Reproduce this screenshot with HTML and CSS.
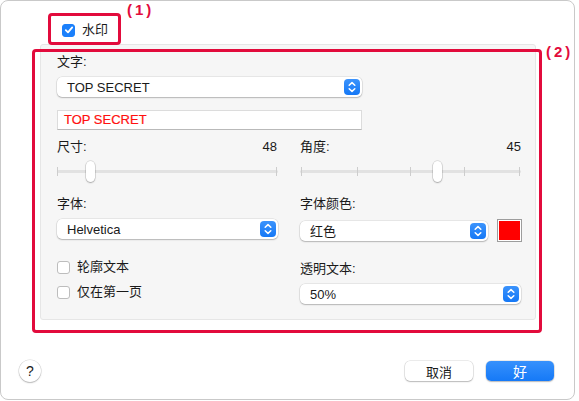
FILE: index.html
```html
<!DOCTYPE html>
<html lang="zh">

<head>
  <meta charset="UTF-8">
  <title>水印</title>
  <link rel="stylesheet" href="styles.css">
</head>

<body>

  <section class="dialog">
    <div class="head">
      <label class="check check-on">
        <span class="box">
          <svg width="10" height="10" viewBox="0 0 10 10"><path d="M1.8 5.2 L4 7.4 L8.2 2.4" fill="none" stroke="#fff" stroke-width="1.8" stroke-linecap="round" stroke-linejoin="round"/></svg>
        </span>
        水印
      </label>
    </div>

    <div class="panel">
      <div class="label">文字:</div>
      <div class="popup wide">
        <span>TOP SECRET</span>
        <span class="stepper">
          <svg width="16" height="16" viewBox="0 0 16 16"><path d="M5.2 6.3 L8 3.6 L10.8 6.3 M5.2 9.7 L8 12.4 L10.8 9.7" fill="none" stroke="#fff" stroke-width="1.5" stroke-linecap="round" stroke-linejoin="round"/></svg>
        </span>
      </div>
      <div class="field">TOP SECRET</div>

      <div class="cols">
        <div class="col">
          <div class="label row"><span>尺寸:</span><span>48</span></div>
          <div class="slider">
            <i class="tick" style="left: 0"></i>
            <i class="tick" style="left: 219px"></i>
            <span class="knob" style="left: 29px"></span>
          </div>
          <div class="label gap">字体:</div>
          <div class="popup">
            <span>Helvetica</span>
            <span class="stepper">
              <svg width="16" height="16" viewBox="0 0 16 16"><path d="M5.2 6.3 L8 3.6 L10.8 6.3 M5.2 9.7 L8 12.4 L10.8 9.7" fill="none" stroke="#fff" stroke-width="1.5" stroke-linecap="round" stroke-linejoin="round"/></svg>
            </span>
          </div>
          <label class="check plain first"><span class="box"></span>轮廓文本</label>
          <label class="check plain second"><span class="box"></span>仅在第一页</label>
        </div>

        <div class="col">
          <div class="label row"><span>角度:</span><span>45</span></div>
          <div class="slider">
            <i class="tick" style="left: 1px"></i>
            <i class="tick" style="left: 57px"></i>
            <i class="tick" style="left: 110px"></i>
            <i class="tick" style="left: 164px"></i>
            <i class="tick" style="left: 219px"></i>
            <span class="knob" style="left: 133px"></span>
          </div>
          <div class="label gap">字体颜色:</div>
          <div class="color-row">
            <div class="popup">
              <span>红色</span>
              <span class="stepper">
                <svg width="16" height="16" viewBox="0 0 16 16"><path d="M5.2 6.3 L8 3.6 L10.8 6.3 M5.2 9.7 L8 12.4 L10.8 9.7" fill="none" stroke="#fff" stroke-width="1.5" stroke-linecap="round" stroke-linejoin="round"/></svg>
              </span>
            </div>
            <div class="swatch"><span></span></div>
          </div>
          <div class="label alpha">透明文本:</div>
          <div class="popup">
            <span>50%</span>
            <span class="stepper">
              <svg width="16" height="16" viewBox="0 0 16 16"><path d="M5.2 6.3 L8 3.6 L10.8 6.3 M5.2 9.7 L8 12.4 L10.8 9.7" fill="none" stroke="#fff" stroke-width="1.5" stroke-linecap="round" stroke-linejoin="round"/></svg>
            </span>
          </div>
        </div>
      </div>
    </div>

    <footer class="foot">
      <button class="help">?</button>
      <div class="actions">
        <button class="btn">取消</button>
        <button class="btn primary">好</button>
      </div>
    </footer>

    <div class="mark mark-1"></div>
    <div class="tag tag-1">(1)</div>
    <div class="mark mark-2"></div>
    <div class="tag tag-2">(2)</div>
  </section>

</body>

</html>
```

FILE: styles.css
```css
* {
  margin: 0;
  padding: 0;
  box-sizing: border-box;
  font-family: "Liberation Sans", "Noto Sans CJK SC", sans-serif;

  --mark-red: #e20b3c;
  --blue: #1b80fb;
  --text: #1a1a1a;
}

body {
  background-color: #fff;
  width: 579px;
  height: 401px;
  overflow: hidden;
}

.dialog {
  position: relative;
  width: 575px;
  height: 400px;
  background-color: #fff;
  border: 1px solid #c9c9c9;
  border-radius: 8px;
  color: var(--text);
  font-size: 13px;
  display: flex;
  flex-direction: column;
}

.head {
  height: 43px;
  padding: 21px 0 0 61px;
}

.check {
  display: flex;
  align-items: center;
  gap: 7px;
  height: 16px;
  line-height: 16px;
}

.check .box {
  width: 13px;
  height: 13px;
  border-radius: 3px;
  background-color: #fff;
  border: 1px solid #bdbdbd;
  display: grid;
  place-content: center;
}

.check-on .box {
  background-color: var(--blue);
  border-color: var(--blue);
}

.panel {
  margin-left: 39px;
  width: 496px;
  height: 276px;
  background-color: #f6f6f6;
  border: 1px solid #e6e6e6;
  border-radius: 3px;
  padding: 9px 0 0 16px;
}

.label {
  height: 16px;
  line-height: 16px;
}

.label.row {
  display: flex;
  justify-content: space-between;
  padding-right: 1px;
}

.popup {
  margin-top: 7px;
  height: 20px;
  width: 221px;
  background-color: #fff;
  border-radius: 5px;
  box-shadow: 0 0 0 0.5px rgba(0, 0, 0, 0.12), 0 1px 1.5px rgba(0, 0, 0, 0.22);
  display: flex;
  align-items: center;
  justify-content: space-between;
  padding: 0 2px 0 10px;
}

.popup.wide {
  width: 305px;
}

.stepper {
  width: 16px;
  height: 16px;
  border-radius: 4px;
  background: linear-gradient(#3b93fc, #1578f6);
  display: grid;
  place-content: center;
}

.field {
  margin-top: 13px;
  width: 305px;
  height: 20px;
  background-color: #fff;
  border: 1px solid #dcdcdc;
  border-bottom-color: #b9b9b9;
  color: #ff1010;
  font-weight: 500;
  -webkit-text-stroke: 0.2px #ff1010;
  line-height: 18px;
  padding-left: 6px;
}

.cols {
  display: grid;
  grid-template-columns: 221px 222px;
  gap: 22px;
  margin-top: 9px;
}

.slider {
  position: relative;
  height: 21px;
  margin-top: 6px;
  width: 221px;
}

.slider::before {
  content: "";
  position: absolute;
  left: 0;
  right: 0;
  top: 9px;
  height: 3px;
  background-color: #e2e2e2;
  border-radius: 2px;
}

.tick {
  position: absolute;
  top: 6px;
  width: 1px;
  height: 9px;
  background-color: #cdcdcd;
}

.knob {
  position: absolute;
  top: 0;
  width: 9px;
  height: 21px;
  border-radius: 5px;
  background-color: #fff;
  box-shadow: 0 0 0 0.5px rgba(0, 0, 0, 0.18), 0 1px 1.5px rgba(0, 0, 0, 0.25);
}

.label.gap {
  margin-top: 14px;
}

.color-row {
  display: flex;
  align-items: center;
  gap: 9px;
}

.color-row .popup {
  width: 188px;
}

.swatch {
  margin-top: 7px;
  width: 25px;
  height: 23px;
  border: 1px solid #9d9d9d;
  padding: 1px;
  background-color: #fff;
}

.swatch span {
  display: block;
  height: 100%;
  background-color: #ff0000;
}

.check.first {
  margin-top: 20px;
}

.check.second {
  margin-top: 9px;
}

.label.alpha {
  margin-top: 19px;
}

.foot {
  display: flex;
  justify-content: space-between;
  align-items: center;
  padding: 0 20px 0 18px;
  margin-top: 40px;
}

button {
  border: none;
  outline: none;
  background-color: #fff;
  font-size: 13px;
  color: var(--text);
  cursor: pointer;
}

.help {
  width: 22px;
  height: 22px;
  border-radius: 50%;
  box-shadow: 0 0 0 0.5px rgba(0, 0, 0, 0.15), 0 1px 1.5px rgba(0, 0, 0, 0.22);
  font-size: 14px;
}

.actions {
  display: flex;
  gap: 13px;
}

.btn {
  width: 68px;
  height: 20px;
  border-radius: 5px;
  box-shadow: 0 0 0 0.5px rgba(0, 0, 0, 0.15), 0 1px 1.5px rgba(0, 0, 0, 0.22);
}

.btn.primary {
  background: linear-gradient(#3791fc, #1579f7);
  color: #fff;
  font-size: 14px;
}

.mark {
  position: absolute;
  border: 3px solid var(--mark-red);
  border-radius: 4px;
}

.mark-1 {
  left: 47px;
  top: 12px;
  width: 73px;
  height: 32px;
}

.mark-2 {
  left: 31px;
  top: 48px;
  width: 510px;
  height: 284px;
}

.tag {
  position: absolute;
  color: var(--mark-red);
  font-weight: bold;
  font-size: 15px;
  letter-spacing: 3px;
  line-height: 16px;
}

.tag-1 {
  left: 126px;
  top: 1px;
}

.tag-2 {
  left: 545px;
  top: 43px;
}
```
